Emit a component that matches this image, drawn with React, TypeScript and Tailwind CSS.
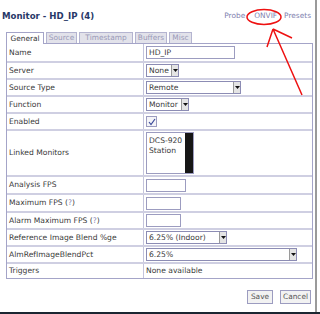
import React from "react";

const font = { fontFamily: '"DejaVu Sans", Verdana, sans-serif' };

function Arrow() {
  return (
    <span className="inline-flex h-[11px] w-[7px] items-center justify-center border-l border-[#9a9a9a] bg-[#e4e4e4]">
      <svg width="5" height="3" viewBox="0 0 5 3">
        <path d="M0 0h5L2.5 3z" fill="#111" />
      </svg>
    </span>
  );
}

function Select({ value, width }: { value: string; width: string }) {
  return (
    <div className={`flex h-[13px] items-center justify-between border border-[#8c8cb4] bg-white pl-[2px] ${width}`}>
      <span className="text-[7.6px] leading-none text-[#3a3a3a]">{value}</span>
      <Arrow />
    </div>
  );
}

function TextBox({ value = "", width }: { value?: string; width: string }) {
  return (
    <div className={`flex h-[13px] items-center border border-[#9c9cc0] bg-white pl-[2px] ${width}`}>
      <span className="text-[7.6px] leading-none text-[#3a3a3a]">{value}</span>
    </div>
  );
}

type Row = { label: React.ReactNode; h: string; value: React.ReactNode };

const rows: Row[] = [
  { label: "Name", h: "h-[17px]", value: <TextBox value="HD_IP" width="w-[89px]" /> },
  { label: "Server", h: "h-[17px]", value: <Select value="None" width="w-[33px]" /> },
  { label: "Source Type", h: "h-[17px]", value: <Select value="Remote" width="w-[95px]" /> },
  { label: "Function", h: "h-[17px]", value: <Select value="Monitor" width="w-[43px]" /> },
  {
    label: "Enabled",
    h: "h-[17px]",
    value: (
      <span className="flex h-[11px] w-[11px] items-center justify-center border border-[#9c9cc0] bg-[#f4f4f8]">
        <svg width="8" height="8" viewBox="0 0 8 8">
          <path d="M1 4l2 2.5L7 1" stroke="#3a4a9a" strokeWidth="1.2" fill="none" />
        </svg>
      </span>
    ),
  },
  {
    label: "Linked Monitors",
    h: "h-[46px]",
    value: (
      <div className="flex h-[42px] w-[48px] border border-[#9c9cc0] bg-white">
        <div className="flex-1 pl-[2px] pt-[3px] text-[7.6px] leading-[10px] text-[#3a3a3a]">
          DCS-920
          <br />
          Station
        </div>
        <div className="w-[8px] bg-[#161616]" />
      </div>
    ),
  },
  { label: "Analysis FPS", h: "h-[18px]", value: <TextBox width="w-[40px]" /> },
  {
    label: (
      <>
        Maximum FPS (<span className="text-[#8a8ab8]">?</span>)
      </>
    ),
    h: "h-[18px]",
    value: <TextBox width="w-[35px]" />,
  },
  {
    label: (
      <>
        Alarm Maximum FPS (<span className="text-[#8a8ab8]">?</span>)
      </>
    ),
    h: "h-[17px]",
    value: <TextBox width="w-[35px]" />,
  },
  { label: "Reference Image Blend %ge", h: "h-[17px]", value: <Select value="6.25% (Indoor)" width="w-[81px]" /> },
  { label: "AlmRefImageBlendPct", h: "h-[17px]", value: <Select value="6.25%" width="w-[151px]" /> },
  { label: "Triggers", h: "h-[16px]", value: <span className="text-[7.6px] text-[#3a3a3a]">None available</span> },
];

const tabs = [
  { name: "General", w: "w-[38px]", active: true },
  { name: "Source", w: "w-[31px]" },
  { name: "Timestamp", w: "w-[54px]" },
  { name: "Buffers", w: "w-[32px]" },
  { name: "Misc", w: "w-[23px]" },
];

export default function App() {
  return (
    <div className="relative h-[314px] w-[320px] overflow-hidden bg-white" style={font}>
      <div className="flex h-[312px] w-[317px] flex-col border-r-2 border-[#9a9a9a]">
        <div className="flex items-end justify-between pl-[2px] pr-[4px] pt-[11px]">
          <h1 className="text-[8.6px] font-bold leading-[10px] text-[#273868]">Monitor - HD_IP (4)</h1>
          <div className="flex text-[7.4px] leading-[10px] text-[#8080ae]">
            <span>Probe</span>
            <span className="ml-[9px]">ONVIF</span>
            <span className="ml-[7px]">Presets</span>
          </div>
        </div>

        <div className="mt-[11px] flex gap-[2px] pl-[6px]">
          {tabs.map((t) => (
            <div
              key={t.name}
              className={`flex h-[11px] items-center justify-center border border-b-0 text-[7.4px] leading-none ${t.w} ${
                t.active
                  ? "relative z-10 -mb-px h-[12px] border-[#a4a4c8] bg-white text-[#333]"
                  : "border-[#b4b4d0] bg-[#e2e2ea] text-[#9a9ab8]"
              }`}
            >
              {t.name}
            </div>
          ))}
        </div>

        <div className="ml-[6px] w-[307px] border border-[#a4a4c8]">
          {rows.map((r, i) => (
            <div
              key={i}
              className={`flex ${r.h} ${i > 0 ? "border-t-2 border-[#cfcfe2]" : ""}`}
            >
              <div className="flex w-[137px] items-center border-r border-[#c4c4dc] pl-[2px] text-[7.6px] leading-none text-[#3a3a3a]">
                {r.label}
              </div>
              <div className="flex flex-1 items-center pl-[2px]">{r.value}</div>
            </div>
          ))}
        </div>

        <div className="mt-[11px] flex justify-end gap-[7px] pr-[4px]">
          <button className="h-[14px] w-[26px] border border-[#9c9cc0] bg-[#f2f2f2] text-[7.4px] leading-none text-[#555]">
            Save
          </button>
          <button className="h-[14px] w-[31px] border border-[#9c9cc0] bg-[#f2f2f2] text-[7.4px] leading-none text-[#555]">
            Cancel
          </button>
        </div>
      </div>
      <div className="h-[2px] w-full bg-[#1b2631]" />

      <svg className="pointer-events-none absolute left-0 top-0" width="320" height="314" viewBox="0 0 320 314">
        <ellipse cx="264" cy="17" rx="17" ry="7.5" stroke="#ee1111" strokeWidth="1.5" fill="none" />
        <path d="M273 29L302 95M273 29L267 47M273 29L292 38" stroke="#ee1111" strokeWidth="1.5" fill="none" />
      </svg>
    </div>
  );
}
